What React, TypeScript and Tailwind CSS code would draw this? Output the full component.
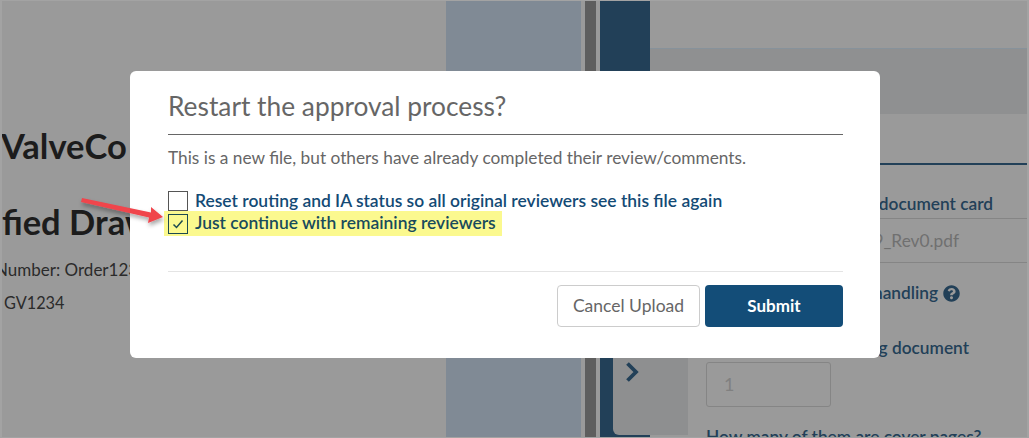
import { FaQuestionCircle } from "react-icons/fa";

export default function App() {
  return (
    <div className="relative flex h-[438px] w-[1029px] overflow-hidden border-x-2 border-t border-b border-[#a3a3a3] bg-[#9a9a9a] font-['Lato',sans-serif]">
      {/* left document column */}
      <div className="flex w-[444px] shrink-0 flex-col overflow-hidden pt-[125px] text-[#1c1c1c]">
        <div className="flex h-[76px] items-start -ml-px text-[34.5px] leading-10 font-bold whitespace-nowrap">ValveCo</div>
        <div className="-ml-[76px] h-[56px] text-[34.5px] leading-10 font-bold whitespace-nowrap">Certified Drawing</div>
        <div className="-ml-[7px] h-[33px] text-[17px] leading-6 whitespace-nowrap text-[#2b2b2b]">Number: Order1234</div>
        <div className="pl-[2px] text-[16.3px] leading-6 whitespace-nowrap text-[#2b2b2b]">GV1234</div>
      </div>
      {/* blue-gray preview strip */}
      <div className="h-full w-[135px] shrink-0 bg-[#808a95]" />
      <div className="w-1 shrink-0" />
      <div className="h-full w-[11px] shrink-0 bg-[#5e5e5e]" />
      <div className="w-1 shrink-0" />
      {/* dark blue rail with tab */}
      <div className="flex h-full w-[88px] shrink-0 flex-col">
        <div className="flex h-[299px] shrink-0">
          <div className="w-[50px] shrink-0 bg-[#224058]" />
          <div className="flex-1 pt-[47px]">
            <div className="h-[66px] border-t border-[#87929b] bg-[#8f9091]" />
          </div>
        </div>
        <div className="flex min-h-0 flex-1 bg-[#9a9a9a]">
          <div className="w-[13px] shrink-0 bg-[#224058]" />
          <div className="relative flex-1 bg-[#224058]">
            <div className="h-full rounded-bl-[6px] bg-[#8e8f90] pt-[61px] pl-[12px]">
              <svg width="14" height="22" viewBox="0 0 14 22" fill="none">
                <path d="M2.5 2.5l8.5 8.5-8.5 8.5" stroke="#224058" strokeWidth="3.8" />
              </svg>
            </div>
          </div>
        </div>
        <div className="flex h-[2px] shrink-0">
          <div className="w-[50px] bg-[#224058]" />
        </div>
      </div>
      {/* right form panel */}
      <div className="flex min-w-0 flex-1 flex-col">
        <div className="h-[47px] shrink-0" />
        <div className="h-[66px] shrink-0 border-t border-[#87929b] bg-[#8f9091]" />
        <div className="flex min-h-0 flex-1 flex-col overflow-hidden text-[17.3px] font-semibold whitespace-nowrap text-[#224058]">
          <div className="mt-[49px] h-0.5 shrink-0 bg-[#224058]" />
          <div className="mt-[27px] flex h-[24px] items-center justify-end pr-[34px] leading-6">Attach to document card</div>
          <div className="mt-[2px] h-px shrink-0 bg-[#858585]" />
          <div className="flex h-[43px] shrink-0 items-center justify-end pr-[68px] font-normal text-[#707070]">Order1234_GV1239_Rev0.pdf</div>
          <div className="h-px shrink-0 bg-[#858585]" />
          <div className="mt-[18px] flex h-6 shrink-0 items-center justify-end gap-[5px] pr-[67px]">
            <span>Special handling</span>
            <FaQuestionCircle className="text-[17px] text-[#224058]" />
          </div>
          <div className="mt-[31px] flex h-6 shrink-0 items-center justify-end pr-[58px]">Pages in the drawing document</div>
          <div className="ml-[18px] mt-[2px] flex h-[45px] w-[125px] shrink-0 items-center rounded-[3px] border border-[#858585] pl-[17px] text-[18px] font-normal text-[#808080]">1</div>
          <div className="ml-[18px] mt-[18px] leading-6">How many of them are cover pages?</div>
        </div>
      </div>

      {/* modal */}
      <div className="absolute top-[70px] left-[128px] flex h-[287px] w-[750px] flex-col rounded-[6px] bg-white px-[38px] text-[#666666]">
        <h2 className="mt-[18px] text-[26.3px] leading-[34px] font-normal">Restart the approval process?</h2>
        <div className="mt-[11px] h-px w-[675px] bg-[#666666]" />
        <p className="mt-[11px] text-[17.3px] leading-6">This is a new file, but others have already completed their review/comments.</p>
        <div className="mt-[20px] flex h-[21px] items-center gap-[7px]">
          <span className="h-5 w-5 shrink-0 border border-[#555555] bg-white" />
          <span className="text-[17.45px] leading-5 font-semibold text-[#134a75]">Reset routing and IA status so all original reviewers see this file again</span>
        </div>
        <div className="-ml-1 flex h-[25px] w-[338px] items-center gap-[7px] bg-[#fbf98f] pl-1">
          <span className="flex h-5 w-5 shrink-0 items-center justify-center border border-[#1c4a50] bg-[#fbf98f]">
            <svg width="12" height="10" viewBox="0 0 12 10" fill="none"><path d="M1.5 5.5l3 3 6-7" stroke="#1c4a50" strokeWidth="1.5" /></svg>
          </span>
          <span className="-mt-px text-[17.45px] leading-5 font-semibold text-[#184b5c]">Just continue with remaining reviewers</span>
        </div>
        <div className="mt-[35px] h-px w-[675px] bg-[#e4e4e4]" />
        <div className="mt-[13px] flex w-[675px] justify-end gap-[5px]">
          <button className="h-[42px] w-[143px] rounded-[4px] border border-[#cccccc] bg-white text-[17.5px] leading-6 text-[#666666]">Cancel Upload</button>
          <button className="h-[42px] w-[138px] rounded-[4px] bg-[#134d78] text-[17px] leading-6 font-bold text-white">Submit</button>
        </div>
      </div>

      {/* annotation arrow */}
      <svg className="absolute top-[187px] left-[70px]" width="100" height="45" viewBox="0 0 100 45" fill="none">
        <defs><filter id="s" x="-20%" y="-40%" width="140%" height="200%"><feDropShadow dx="1" dy="3" stdDeviation="2" floodColor="#000" floodOpacity="0.35" /></filter></defs>
        <path d="M10 10L79 24.5l0-5.5 12 10-15 6 1-5.5L9 14z" fill="#f0444c" filter="url(#s)" />
      </svg>
    </div>
  );
}
